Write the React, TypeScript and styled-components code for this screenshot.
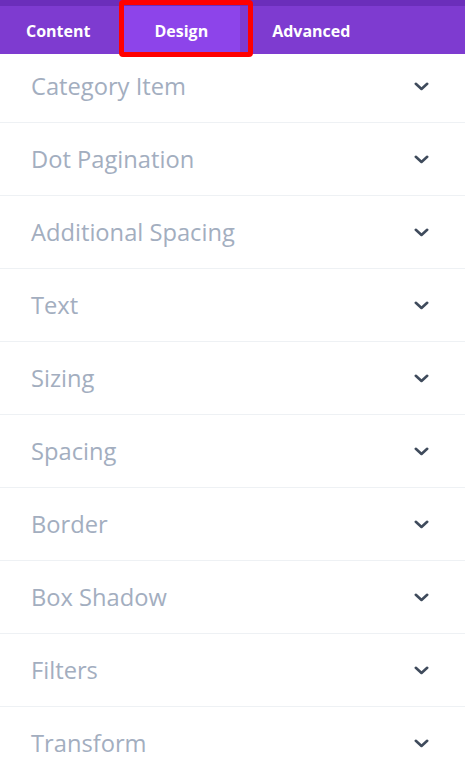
import React from "react";
import styled, { createGlobalStyle } from "styled-components";

const GlobalStyle = createGlobalStyle`
    html, body {
        margin: 0;
        padding: 0;
        background: #ffffff;
        font-family: "Open Sans", "Liberation Sans", sans-serif;
    }
`;

const Panel = styled.div`
    width: 465px;
    height: 757px;
    display: flex;
    flex-direction: column;
    overflow: hidden;
    background: #ffffff;
`;

const TopStrip = styled.div`
    height: 6px;
    background: #6b2eba;
`;

const TabBar = styled.div`
    height: 48px;
    display: flex;
    align-items: stretch;
    background: #7e3bd0;
    position: relative;
    z-index: 2;
`;

const Tab = styled.div<{ active?: boolean }>`
    position: relative;
    display: flex;
    align-items: center;
    padding: 1px 32px 0;
    font-size: 16px;
    font-weight: 700;
    color: #ffffff;
    background: ${(props) => (props.active ? "#8d44ea" : "transparent")};

    &:first-child {
        padding-left: 26px;
    }
`;

const Highlight = styled.div`
    position: absolute;
    top: -6px;
    bottom: -3px;
    left: -3px;
    width: 134px;
    box-sizing: border-box;
    border: 5px solid #ff0000;
    border-radius: 4px;
    pointer-events: none;
`;

const Viewport = styled.div`
    flex: 1;
    overflow: hidden;
`;

const List = styled.div`
    margin-top: -4px;
`;

const Row = styled.div`
    height: 72px;
    display: flex;
    align-items: center;
    justify-content: space-between;
    padding: 0 36px 0 31px;
    border-bottom: 1px solid #eef1f4;
`;

const Title = styled.span`
    font-size: 23.7px;
    font-weight: 400;
    color: #a3aebf;
`;

const Chevron = styled.svg`
    width: 15px;
    height: 9px;
    flex-shrink: 0;
`;

const sections = [
    "Category Item",
    "Dot Pagination",
    "Additional Spacing",
    "Text",
    "Sizing",
    "Spacing",
    "Border",
    "Box Shadow",
    "Filters",
    "Transform",
];

function App() {
    return (
        <>
            <GlobalStyle />
            <Panel>
                <TopStrip />
                <TabBar>
                    <Tab>Content</Tab>
                    <Tab active>
                        Design
                        <Highlight />
                    </Tab>
                    <Tab>Advanced</Tab>
                </TabBar>
                <Viewport>
                    <List>
                        {sections.map((name) => (
                            <Row key={name}>
                                <Title>{name}</Title>
                                <Chevron viewBox="0 0 15 9">
                                    <path
                                        d="M1.8 1.8 L7.5 7 L13.2 1.8"
                                        fill="none"
                                        stroke="#3f4b5c"
                                        strokeWidth="2.6"
                                        strokeLinecap="round"
                                        strokeLinejoin="round"
                                    />
                                </Chevron>
                            </Row>
                        ))}
                    </List>
                </Viewport>
            </Panel>
        </>
    );
}

export default App;
